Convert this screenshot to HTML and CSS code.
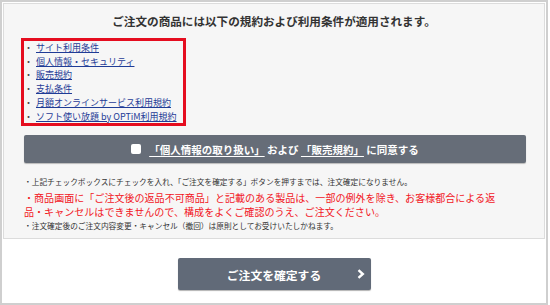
FILE: index.html
```html
<!DOCTYPE html>
<html lang="ja">
<head>
<meta charset="utf-8">
<link rel="stylesheet" href="styles.css">
</head>
<body>
<div class="frame">
  <div class="panel">
    <h1 class="title">ご注文の商品には以下の規約および利用条件が適用されます。</h1>
    <ul class="terms">
      <li><a href="#">サイト利用条件</a></li>
      <li><a href="#">個人情報・セキュリティ</a></li>
      <li><a href="#">販売規約</a></li>
      <li><a href="#">支払条件</a></li>
      <li><a href="#">月額オンラインサービス利用規約</a></li>
      <li><a href="#">ソフト使い放題 by OPTiM利用規約</a></li>
    </ul>
    <label class="agree">
      <span class="box"></span>
      <span class="agree-text"><u>「個人情報の取り扱い」</u> および <u>「販売規約」</u> に同意する</span>
    </label>
    <div class="notes">
      <p class="note">・上記チェックボックスにチェックを入れ、「ご注文を確定する」ボタンを押すまでは、注文確定になりません。</p>
      <p class="warn">・商品画面に「ご注文後の返品不可商品」と記載のある製品は、一部の例外を除き、お客様都合による返<br>品・キャンセルはできませんので、構成をよくご確認のうえ、ご注文ください。</p>
      <p class="note">・注文確定後のご注文内容変更・キャンセル（撤回）は原則としてお受けいたしかねます。</p>
    </div>
  </div>
  <div class="actions">
    <button class="confirm" type="button">ご注文を確定する
      <svg class="chev" width="8" height="10" viewBox="0 0 8 10"><polyline points="1.5,1.2 5.8,5 1.5,8.8" fill="none" stroke="#fff" stroke-width="2.4" stroke-linejoin="miter"/></svg>
    </button>
  </div>
</div>
</body>
</html>
```

FILE: styles.css
```css
* { box-sizing: border-box; }
html, body { margin: 0; padding: 0; background: #fff; }
body {
  font-family: "Noto Sans CJK JP", "Noto Sans", sans-serif;
  color: #333;
}
.frame {
  width: 548px;
  height: 305px;
  border: 2px solid #cfcfcf;
  padding: 1px;
  display: flex;
  flex-direction: column;
}
.panel {
  height: 236px;
  background: #f6f6f6;
  border: 1px solid #dcdcdc;
  display: flex;
  flex-direction: column;
  align-items: flex-start;
}
.title {
  align-self: stretch;
  margin: 0;
  padding-top: 9px;
  font-size: 11.6px;
  line-height: 16px;
  font-weight: bold;
  text-align: center;
  color: #333;
}
.terms {
  list-style: none;
  margin: 9px 0 0 17px;
  padding: 0;
  width: 165px;
  border: 3px solid #e50d1f;
  font-size: 9px;
  line-height: 13.7px;
}
.terms li { white-space: nowrap; display: flex; }
.terms li::before {
  content: "・";
  display: inline-block;
  width: 9px;
  margin-right: 3px;
  text-align: center;
  color: #444;
}
.terms a { color: #1f3c96; text-decoration: underline; }
.agree {
  align-self: stretch;
  margin: 9px 18px 0 20px;
  height: 28px;
  background: #666d78;
  border-radius: 2px;
  box-shadow: 0 1px 1px rgba(0,0,0,.25);
  display: flex;
  align-items: center;
  justify-content: center;
  gap: 8px;
  color: #fff;
  font-size: 10.5px;
  font-weight: bold;
}
.box {
  width: 10px;
  height: 10px;
  background: #fff;
  border-radius: 2px;
}
.agree-text u { text-decoration: underline; text-underline-offset: 2px; }
.notes {
  margin: 12px 0 0 20px;
}
.notes p { margin: 0; white-space: nowrap; }
.note {
  font-size: 7.7px;
  line-height: 14px;
  color: #333;
}
.warn {
  margin-top: 2px !important;
  font-size: 10.05px;
  line-height: 14px;
  color: #f2161e;
}
.actions {
  flex: 1;
  display: flex;
  justify-content: center;
  padding-top: 19px;
}
.confirm {
  position: relative;
  width: 193px;
  height: 32px;
  border: 0;
  border-radius: 2px;
  background: #616a78;
  box-shadow: 0 1px 1px rgba(0,0,0,.3);
  color: #fff;
  font-family: "Noto Sans CJK JP", "Noto Sans", sans-serif;
  font-size: 11.8px;
  font-weight: bold;
  padding: 0;
}
.chev {
  position: absolute;
  right: 6px;
  top: 11px;
}
```
